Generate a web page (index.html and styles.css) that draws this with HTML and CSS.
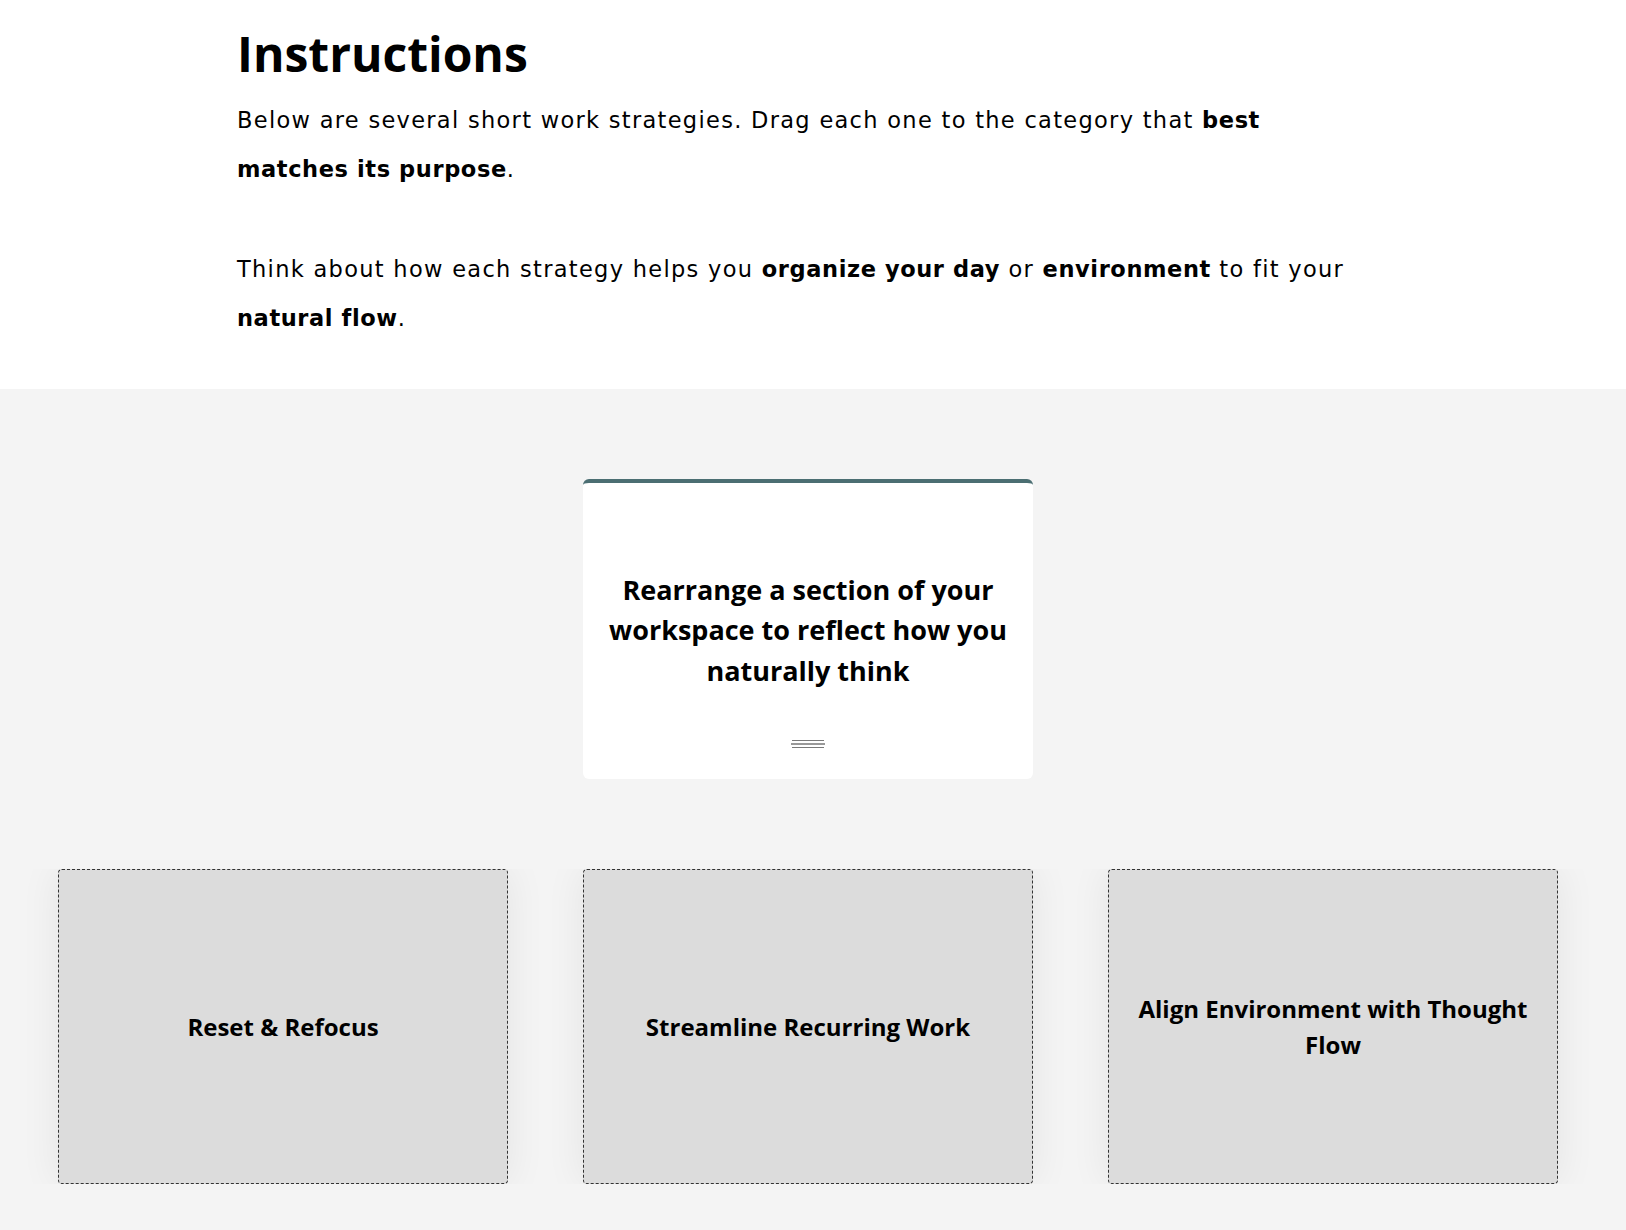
FILE: index.html
```html
<!DOCTYPE html>
<html lang="en">
<head>
<meta charset="utf-8">
<title>Instructions</title>
<link rel="stylesheet" href="styles.css">
</head>
<body>
<header class="intro">
  <div class="intro-inner">
    <h1 class="title">Instructions</h1>
    <p class="lead">Below are several short work strategies. Drag each one to the category that <strong>best matches its purpose</strong>.</p>
    <p class="lead second">Think about how each strategy helps you <strong>organize your day</strong> or <strong>environment</strong> to fit your <strong>natural flow</strong>.</p>
  </div>
</header>
<main class="board">
  <div class="board-inner">
    <div class="deck">
      <div class="card">
        <p class="card-text">Rearrange a section of your workspace to reflect how you naturally think</p>
        <svg class="handle" width="34" height="10" viewBox="0 0 34 10" aria-hidden="true">
          <line x1="1" y1="1.5" x2="33" y2="1.5" stroke="#7a7a7a" stroke-width="1"/>
          <line x1="0" y1="5" x2="34" y2="5" stroke="#777" stroke-width="1.6"/>
          <line x1="1" y1="8.5" x2="33" y2="8.5" stroke="#7a7a7a" stroke-width="1"/>
        </svg>
      </div>
    </div>
    <div class="zones">
      <div class="zone"><span class="zone-label">Reset &amp; Refocus</span></div>
      <div class="zone"><span class="zone-label">Streamline Recurring Work</span></div>
      <div class="zone"><span class="zone-label">Align Environment with Thought Flow</span></div>
    </div>
  </div>
</main>
</body>
</html>
```

FILE: styles.css
```css
html {
  background: #f4f4f4;
}
body {
  margin: 0;
  color: #000;
  font-family: "Open Sans", "Liberation Sans", sans-serif;
}
.intro {
  background: #fff;
  padding: 21px 0 46px;
}
.intro-inner {
  width: 1120px;
  margin-left: 237px;
}
.title {
  margin: 0 0 10px;
  font-family: "Open Sans", sans-serif;
  font-weight: 700;
  font-size: 48px;
  line-height: 65px;
}
.lead {
  margin: 0;
  font-family: "DejaVu Sans", "Liberation Sans", sans-serif;
  font-size: 22.5px;
  line-height: 48.7px;
  font-weight: 400;
  letter-spacing: 1.3px;
}
.lead strong {
  font-weight: 700;
  letter-spacing: 0.6px;
}
.lead.second {
  margin-top: 52px;
}
.board {
  background: #f4f4f4;
  padding: 90px 0 47px;
}
.board-inner {
  width: 1500px;
  margin-left: 58px;
}
.deck {
  display: flex;
  justify-content: center;
}
.card {
  width: 450px;
  box-sizing: border-box;
  background: #fff;
  border-top: 4px solid #4b6e72;
  border-radius: 6px;
  padding: 87px 24px 30px;
  display: flex;
  flex-direction: column;
  align-items: center;
}
.card-text {
  margin: 0;
  text-align: center;
  font-family: "Open Sans", sans-serif;
  font-weight: 700;
  font-size: 27px;
  line-height: 40.5px;
}
.handle {
  display: block;
  margin-top: 48px;
}
.zones {
  margin-top: 90px;
  display: flex;
  gap: 75px;
  overflow-x: auto;
  padding: 0 58px;
  margin-left: -58px;
  margin-right: -58px;
}
.zone {
  flex: 0 0 450px;
  height: 315px;
  box-sizing: border-box;
  background: #dcdcdc;
  border: 1px dashed #333;
  border-radius: 4px;
  box-shadow: 0 0 40px rgba(0, 0, 0, 0.07);
  display: flex;
  align-items: center;
  justify-content: center;
  padding: 0 20px;
  text-align: center;
}
.zone-label {
  font-family: "Open Sans", sans-serif;
  font-weight: 700;
  font-size: 24px;
  line-height: 36px;
}
```
